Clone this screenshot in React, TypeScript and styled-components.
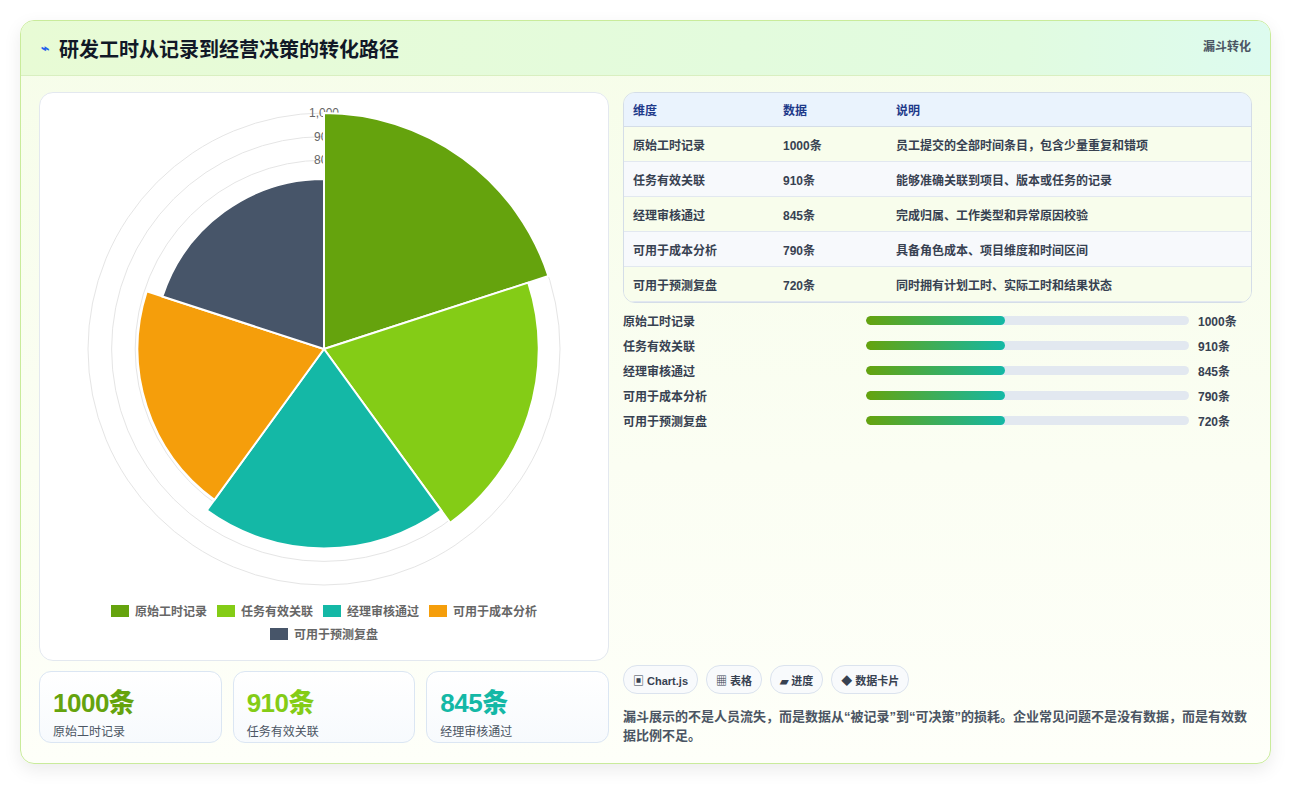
import React from "react";
import styled, { createGlobalStyle } from "styled-components";

const G = createGlobalStyle`
  body { margin:0; background:#fff; font-family:"Liberation Sans","Noto Sans CJK SC",sans-serif; }
`;
const Page = styled.div`padding:20px 20px 21px 20px;`;
const Card = styled.div`
  border:1px solid #c9eb9b; border-radius:14px; overflow:hidden;
  background:linear-gradient(180deg,#f6fde9 0%,#fbfef3 60%,#fefff9 100%);
  box-shadow:0 6px 18px rgba(0,0,0,0.08); height:742px; display:flex; flex-direction:column;
`;
const Header = styled.div`
  height:54px; display:flex; align-items:center; justify-content:space-between;
  padding:0 20px; border-bottom:1px solid #d9efc0;
  background:linear-gradient(90deg,#e8fbd5,#e1fbe0 80%,#ddfbef);
`;
const Title = styled.h1`margin:0; font-size:20px; font-weight:700; color:#111827; display:flex; gap:10px; align-items:center;`;
const Bolt = styled.span`color:#2563eb; font-size:14px;`;
const Tag = styled.span`font-size:12px; font-weight:700; color:#4b5563; align-self:flex-start; margin-top:16px; margin-right:-1px;`;
const Body = styled.div`flex:1; display:grid; grid-template-columns:570px 629px; gap:14px; padding:16px 18px 18px 18px;`;
const Col = styled.div`display:flex; flex-direction:column; gap:10px;`;
const ChartBox = styled.div`
  height:567px; background:#fff; border:1px solid #e3e8ef; border-radius:14px;
  display:flex; flex-direction:column; align-items:center;
`;
const Legend = styled.div`display:flex; flex-wrap:wrap; justify-content:center; gap:6px 10px; width:470px; margin-top:9px;`;
const LItem = styled.span`display:flex; align-items:center; gap:6px; font-size:12px; font-weight:700; color:#666;`;
const Sw = styled.i<{ c: string }>`width:18px; height:12px; background:${p => p.c}; display:inline-block;`;
const Stats = styled.div`display:grid; grid-template-columns:repeat(3,1fr); gap:11px;`;
const Stat = styled.div`height:72px; border:1px solid #dbe6f3; border-radius:12px; background:linear-gradient(180deg,#fff,#f7fafd); padding:10px 13px; box-sizing:border-box;`;
const Big = styled.div<{ c: string }>`font-size:26px; font-weight:800; color:${p => p.c}; letter-spacing:-0.5px;`;
const Small = styled.div`font-size:12px; color:#4b5563; margin-top:3px;`;
const Table = styled.table`width:100%; border-collapse:separate; border-spacing:0; border:1px solid #d4dde8; border-radius:12px; overflow:hidden; font-size:12px; font-weight:700;`;
const Th = styled.th`text-align:left; background:#eaf3fd; color:#1e3a8a; height:33px; padding:0 9px; border-bottom:1px solid #d4dde8;`;
const Td = styled.td<{ alt: boolean }>`height:34px; padding:0 9px; color:#374151; background:${p => p.alt ? "#f7f9fc" : "#f8fdec"}; border-bottom:1px solid #e2e8f0;`;
const Bars = styled.div`display:flex; flex-direction:column; gap:7px; margin-top:-2px;`;
const BarRow = styled.div`display:grid; grid-template-columns:234px 323px 1fr; gap:9px; align-items:center; height:18px; font-size:12px; font-weight:700; color:#374151;`;
const Track = styled.div`height:9px; border-radius:5px; background:#e2e8f0; overflow:hidden;`;
const Fill = styled.div`height:100%; border-radius:5px; background:linear-gradient(90deg,#65a30d,#14b8a6);`;
const Spacer = styled.div`flex:1;`;
const Chips = styled.div`display:flex; gap:8px;`;
const Chip = styled.span`height:27px; padding:0 9px; border:1px solid #dbe3ee; border-radius:14px; background:#f8fafc; display:flex; align-items:center; font-size:11px; font-weight:700; color:#374151;`;
const Note = styled.p`margin:3px 0 0; font-size:13px; line-height:19px; color:#4b5563; font-weight:700;`;

const rows = [
  ["原始工时记录", 1000, "员工提交的全部时间条目，包含少量重复和错项", "#65a30d"],
  ["任务有效关联", 910, "能够准确关联到项目、版本或任务的记录", "#84cc16"],
  ["经理审核通过", 845, "完成归属、工作类型和异常原因校验", "#14b8a6"],
  ["可用于成本分析", 790, "具备角色成本、项目维度和时间区间", "#f59e0b"],
  ["可用于预测复盘", 720, "同时拥有计划工时、实际工时和结果状态", "#475569"],
] as const;

function Polar() {
  const cx = 284, cy = 256, k = 0.236;
  const pt = (r: number, a: number) => [cx + r * Math.cos(a), cy + r * Math.sin(a)];
  return (
    <svg width="568" height="500" style={{ marginTop: 0 }}>
      {[1000, 900, 800, 700, 600, 500, 400, 300, 200, 100].map(v => (
        <circle key={v} cx={cx} cy={cy} r={v * k} fill="none" stroke="#e5e5e5" />
      ))}
      {[1000, 900, 800, 700].map(v => (
        <text key={v} x={cx} y={cy - v * k + 4} textAnchor="middle" fontSize="12" fill="#666">
          {v === 1000 ? "1,000" : v}
        </text>
      ))}
      {rows.map((r, i) => {
        const a0 = -Math.PI / 2 + (i * 2 * Math.PI) / 5, a1 = a0 + (2 * Math.PI) / 5;
        const R = (r[1] as number) * k;
        const [x0, y0] = pt(R, a0), [x1, y1] = pt(R, a1);
        return <path key={i} d={`M${cx},${cy}L${x0},${y0}A${R},${R} 0 0 1 ${x1},${y1}Z`} fill={r[3]} stroke="#fff" strokeWidth="2" />;
      })}
    </svg>
  );
}

export default function App() {
  return (
    <Page>
      <G />
      <Card>
        <Header>
          <Title><Bolt>⌁</Bolt>研发工时从记录到经营决策的转化路径</Title>
          <Tag>漏斗转化</Tag>
        </Header>
        <Body>
          <Col>
            <ChartBox>
              <Polar />
              <Legend>
                {rows.map(r => <LItem key={r[0]}><Sw c={r[3]} />{r[0]}</LItem>)}
              </Legend>
            </ChartBox>
            <Stats>
              {rows.slice(0, 3).map(r => (
                <Stat key={r[0]}><Big c={r[3]}>{r[1]}条</Big><Small>{r[0]}</Small></Stat>
              ))}
            </Stats>
          </Col>
          <Col>
            <Table>
              <thead><tr><Th style={{ width: 132 }}>维度</Th><Th style={{ width: 95 }}>数据</Th><Th>说明</Th></tr></thead>
              <tbody>
                {rows.map((r, i) => (
                  <tr key={r[0]}><Td alt={i % 2 === 1}>{r[0]}</Td><Td alt={i % 2 === 1}>{r[1]}条</Td><Td alt={i % 2 === 1}>{r[2]}</Td></tr>
                ))}
              </tbody>
            </Table>
            <Bars>
              {rows.map(r => (
                <BarRow key={r[0]}><span>{r[0]}</span><Track><Fill style={{ width: "43%" }} /></Track><span>{r[1]}条</span></BarRow>
              ))}
            </Bars>
            <Spacer />
            <Chips><Chip>▣ Chart.js</Chip><Chip>▦ 表格</Chip><Chip>▰ 进度</Chip><Chip>◆ 数据卡片</Chip></Chips>
            <Note>漏斗展示的不是人员流失，而是数据从“被记录”到“可决策”的损耗。企业常见问题不是没有数据，而是有效数据比例不足。</Note>
          </Col>
        </Body>
      </Card>
    </Page>
  );
}
